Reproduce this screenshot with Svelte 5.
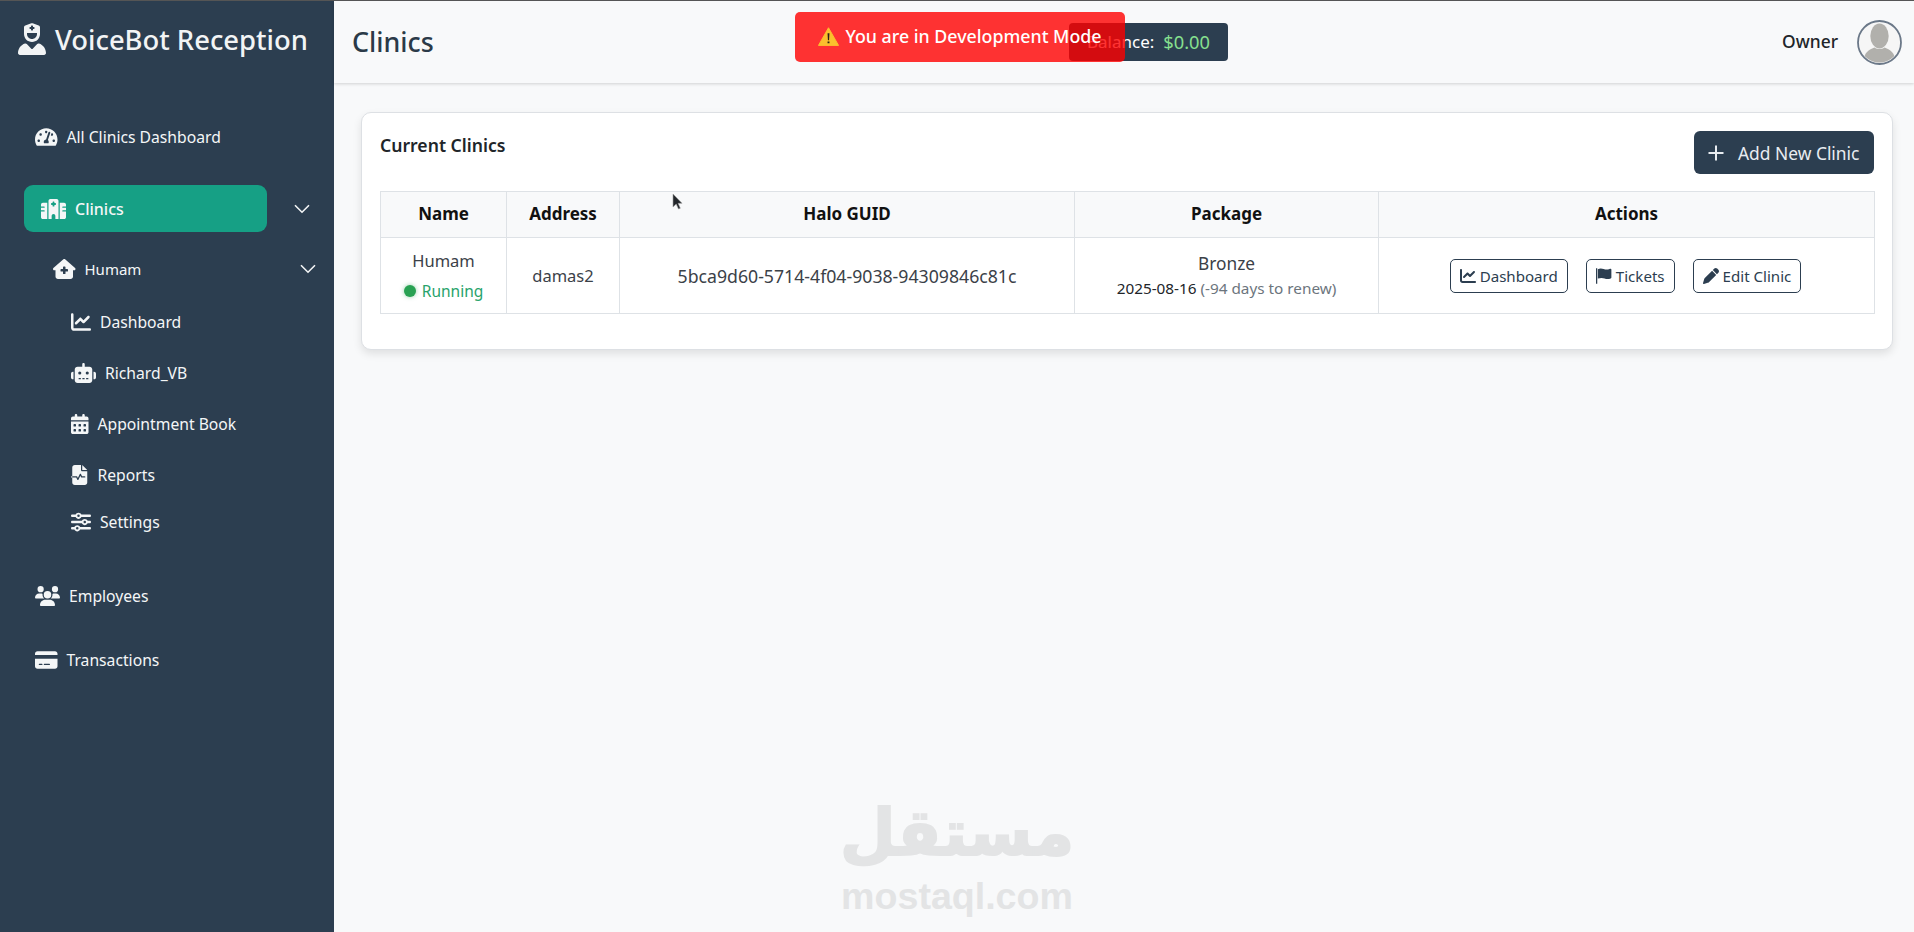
<script lang="ts">
  // FontAwesome-style solid glyphs, keyed by name: [viewBox width, path]
  const icons: Record<string, [number, string]> = {
    nurse: [448, 'M96 128V70.2c0-13.3 8.3-25.3 20.8-30l96-36c7.2-2.7 15.2-2.7 22.5 0l96 36c12.5 4.7 20.8 16.6 20.8 30V128h-.3c.2 2.6 .3 5.3 .3 8v40c0 70.7-57.3 128-128 128s-128-57.3-128-128V136c0-2.7 .1-5.4 .3-8H96zm48 48c0 44.2 35.8 80 80 80s80-35.8 80-80V160H144v16zM111.9 327.7c10.5-3.4 21.8 .4 29.4 8.5l71 75.5c6.3 6.7 17 6.7 23.3 0l71-75.5c7.6-8.1 18.9-11.9 29.4-8.5C401 348.6 448 409.4 448 481.3c0 17-13.8 30.7-30.7 30.7H30.7C13.8 512 0 498.2 0 481.3c0-71.9 47-132.7 111.9-153.6zM208 48V64H192c-4.4 0-8 3.6-8 8V88c0 4.4 3.6 8 8 8h16v16c0 4.4 3.6 8 8 8h16c4.4 0 8-3.6 8-8V96h16c4.4 0 8-3.6 8-8V72c0-4.4-3.6-8-8-8H240V48c0-4.4-3.6-8-8-8H216c-4.4 0-8 3.6-8 8z'],
    gauge: [576, 'M288 32C128.94 32 0 160.94 0 320c0 52.8 14.25 102.26 39.06 144.8 5.61 9.62 16.3 15.2 27.44 15.2h443c11.14 0 21.83-5.58 27.44-15.2C561.75 422.26 576 372.8 576 320c0-159.06-128.94-288-288-288zm0 64c14.71 0 26.58 10.13 30.32 23.65-1.11 2.26-2.64 4.23-3.45 6.67l-9.22 27.67c-5.13 3.49-10.97 6.01-17.64 6.01-17.67 0-32-14.33-32-32S270.33 96 288 96zM96 384c-17.67 0-32-14.33-32-32s14.33-32 32-32 32 14.33 32 32-14.33 32-32 32zm48-160c-17.67 0-32-14.33-32-32s14.33-32 32-32 32 14.33 32 32-14.33 32-32 32zm246.77-72.41l-61.33 184C343.13 347.33 352 364.54 352 384c0 11.72-3.38 22.55-8.88 32H232.88c-5.5-9.45-8.88-20.28-8.88-32 0-33.94 26.5-61.43 59.9-63.59l61.34-184.01c4.17-12.56 17.73-19.45 30.36-15.17 12.57 4.19 19.35 17.79 15.17 30.36zm14.66 57.2l15.52-46.55c3.47-1.29 7.13-2.23 11.05-2.23 17.67 0 32 14.33 32 32s-14.33 32-32 32c-11.38-.01-20.89-6.28-26.57-15.22zM480 384c-17.67 0-32-14.33-32-32s14.33-32 32-32 32 14.33 32 32-14.33 32-32 32z'],
    hospital: [640, 'M192 48c0-26.5 21.5-48 48-48H400c26.5 0 48 21.5 48 48V512H368V432c0-26.5-21.5-48-48-48s-48 21.5-48 48v80H192V48zM48 96H160V512H48c-26.5 0-48-21.5-48-48V320H80c8.8 0 16-7.2 16-16s-7.2-16-16-16H0V224H80c8.8 0 16-7.2 16-16s-7.2-16-16-16H0V144c0-26.5 21.5-48 48-48zm544 0c26.5 0 48 21.5 48 48v48H560c-8.8 0-16 7.2-16 16s7.2 16 16 16h80v64H560c-8.8 0-16 7.2-16 16s7.2 16 16 16h80V464c0 26.5-21.5 48-48 48H480V96H592zM312 64c-8.8 0-16 7.2-16 16v24H272c-8.8 0-16 7.2-16 16v16c0 8.8 7.2 16 16 16h24v24c0 8.8 7.2 16 16 16h16c8.8 0 16-7.2 16-16V152h24c8.8 0 16-7.2 16-16V120c0-8.8-7.2-16-16-16H344V80c0-8.8-7.2-16-16-16H312z'],
    house: [576, 'M543.8 287.6c17 0 32-14 32-32.1c1-9-3-17-11-24L309.5 7c-6-5-14-7-21-7s-15 1-22 8L10 231.5c-7 7-10 15-10 24c0 18 14 32.1 32 32.1h32V448c0 35.3 28.7 64 64 64H448.5c35.5 0 64.2-28.8 64-64.3l-.7-160.2h32zM256 208c0-8.8 7.2-16 16-16h32c8.8 0 16 7.2 16 16v48h48c8.8 0 16 7.2 16 16v32c0 8.8-7.2 16-16 16H320v48c0 8.8-7.2 16-16 16H272c-8.8 0-16-7.2-16-16V320H208c-8.8 0-16-7.2-16-16V272c0-8.8 7.2-16 16-16h48V208z'],
    chart: [512, 'M64 64c0-17.7-14.3-32-32-32S0 46.3 0 64V400c0 44.2 35.8 80 80 80H480c17.7 0 32-14.3 32-32s-14.3-32-32-32H80c-8.8 0-16-7.2-16-16V64zm406.6 86.6c12.5-12.5 12.5-32.8 0-45.3s-32.8-12.5-45.3 0L320 210.7l-57.4-57.4c-12.5-12.5-32.8-12.5-45.3 0l-112 112c-12.5 12.5-12.5 32.8 0 45.3s32.8 12.5 45.3 0L240 221.3l57.4 57.4c12.5 12.5 32.8 12.5 45.3 0l128-128z'],
    robot: [640, 'M320 0c17.7 0 32 14.3 32 32V96H472c39.8 0 72 32.2 72 72V440c0 39.8-32.2 72-72 72H168c-39.8 0-72-32.2-72-72V168c0-39.8 32.2-72 72-72H288V32c0-17.7 14.3-32 32-32zM208 384c-8.8 0-16 7.2-16 16s7.2 16 16 16h32c8.8 0 16-7.2 16-16s-7.2-16-16-16H208zm96 0c-8.8 0-16 7.2-16 16s7.2 16 16 16h32c8.8 0 16-7.2 16-16s-7.2-16-16-16H304zm96 0c-8.8 0-16 7.2-16 16s7.2 16 16 16h32c8.8 0 16-7.2 16-16s-7.2-16-16-16H400zM264 256a40 40 0 1 0 -80 0 40 40 0 1 0 80 0zm152 40a40 40 0 1 0 0-80 40 40 0 1 0 0 80zM48 224H64V416H48c-26.5 0-48-21.5-48-48V272c0-26.5 21.5-48 48-48zm544 0c26.5 0 48 21.5 48 48v96c0 26.5-21.5 48-48 48H576V224h16z'],
    calendar: [448, 'M128 0c17.7 0 32 14.3 32 32V64H288V32c0-17.7 14.3-32 32-32s32 14.3 32 32V64h48c26.5 0 48 21.5 48 48v48H0V112C0 85.5 21.5 64 48 64H96V32c0-17.7 14.3-32 32-32zM0 192H448V464c0 26.5-21.5 48-48 48H48c-26.5 0-48-21.5-48-48V192zm64 80v32c0 8.8 7.2 16 16 16h32c8.8 0 16-7.2 16-16V272c0-8.8-7.2-16-16-16H80c-8.8 0-16 7.2-16 16zm128 0v32c0 8.8 7.2 16 16 16h32c8.8 0 16-7.2 16-16V272c0-8.8-7.2-16-16-16H208c-8.8 0-16 7.2-16 16zm144-16c-8.8 0-16 7.2-16 16v32c0 8.8 7.2 16 16 16h32c8.8 0 16-7.2 16-16V272c0-8.8-7.2-16-16-16H336zM64 400v32c0 8.8 7.2 16 16 16h32c8.8 0 16-7.2 16-16V400c0-8.8-7.2-16-16-16H80c-8.8 0-16 7.2-16 16zm144-16c-8.8 0-16 7.2-16 16v32c0 8.8 7.2 16 16 16h32c8.8 0 16-7.2 16-16V400c0-8.8-7.2-16-16-16H208zm112 16v32c0 8.8 7.2 16 16 16h32c8.8 0 16-7.2 16-16V400c0-8.8-7.2-16-16-16H336c-8.8 0-16 7.2-16 16z'],
    report: [448, 'M96 0C60.7 0 32 28.7 32 64V288H144c6.1 0 11.6 3.4 14.3 8.8L176 332.2l49.7-99.4c2.7-5.4 8.2-8.8 14.3-8.8s11.6 3.4 14.3 8.8L281.9 288H352c8.8 0 16 7.2 16 16s-7.2 16-16 16H272c-6.1 0-11.6-3.4-14.3-8.8L240 275.8l-49.7 99.4c-2.7 5.4-8.2 8.8-14.3 8.8s-11.6-3.4-14.3-8.8L134.1 320H16c-8.8 0-16-7.2-16-16s7.2-16 16-16H32V320 448c0 35.3 28.7 64 64 64H352c35.3 0 64-28.7 64-64V160H288c-17.7 0-32-14.3-32-32V0H96zM288 0V128H416L288 0z'],
    sliders: [512, 'M0 416c0 17.7 14.3 32 32 32l54.7 0c12.3 28.3 40.5 48 73.3 48s61-19.7 73.3-48L480 448c17.7 0 32-14.3 32-32s-14.3-32-32-32l-246.7 0c-12.3-28.3-40.5-48-73.3-48s-61 19.7-73.3 48L32 384c-17.7 0-32 14.3-32 32zm128 0a32 32 0 1 1 64 0 32 32 0 1 1 -64 0zM320 256a32 32 0 1 1 64 0 32 32 0 1 1 -64 0zm32-80c-32.8 0-61 19.7-73.3 48L32 224c-17.7 0-32 14.3-32 32s14.3 32 32 32l246.7 0c12.3 28.3 40.5 48 73.3 48s61-19.7 73.3-48l54.7 0c17.7 0 32-14.3 32-32s-14.3-32-32-32l-54.7 0c-12.3-28.3-40.5-48-73.3-48zM192 128a32 32 0 1 1 0-64 32 32 0 1 1 0 64zm73.3-64C253 35.7 224.8 16 192 16s-61 19.7-73.3 48L32 64C14.3 64 0 78.3 0 96s14.3 32 32 32l86.7 0c12.3 28.3 40.5 48 73.3 48s61-19.7 73.3-48L480 128c17.7 0 32-14.3 32-32s-14.3-32-32-32L265.3 64z'],
    users: [640, 'M144 0a80 80 0 1 1 0 160A80 80 0 1 1 144 0zM512 0a80 80 0 1 1 0 160A80 80 0 1 1 512 0zM0 298.7C0 239.8 47.8 192 106.7 192h42.7c15.9 0 31 3.5 44.6 9.7c-1.3 7.2-1.9 14.7-1.9 22.3c0 38.2 16.8 72.5 43.3 96c-.2 0-.4 0-.7 0H21.3C9.6 320 0 310.4 0 298.7zM405.3 320c-.2 0-.4 0-.7 0c26.6-23.5 43.3-57.8 43.3-96c0-7.6-.7-15-1.9-22.3c13.6-6.3 28.7-9.7 44.6-9.7h42.7C592.2 192 640 239.8 640 298.7c0 11.8-9.6 21.3-21.3 21.3H405.3zM224 224a96 96 0 1 1 192 0 96 96 0 1 1 -192 0zM128 485.3C128 411.7 187.7 352 261.3 352H378.7C452.3 352 512 411.7 512 485.3c0 14.7-11.9 26.7-26.7 26.7H154.7c-14.7 0-26.7-11.9-26.7-26.7z'],
    card: [576, 'M64 32C28.7 32 0 60.7 0 96v32H576V96c0-35.3-28.7-64-64-64H64zM576 224H0V416c0 35.3 28.7 64 64 64H512c35.3 0 64-28.7 64-64V224zM112 352h64c8.8 0 16 7.2 16 16s-7.2 16-16 16H112c-8.8 0-16-7.2-16-16s7.2-16 16-16zm112 16c0-8.8 7.2-16 16-16H368c8.8 0 16 7.2 16 16s-7.2 16-16 16H240c-8.8 0-16-7.2-16-16z'],
    flag: [512, 'M0 8h40v496H0zM60 36c55-26 115-28 185-4s125 24 187-2c32-13 60-8 60 14v260c0 12-6 20-22 28-62 28-128 30-195 6s-128-24-215 0z'],
    pen: [512, 'M362.7 19.3L314.3 67.7 444.3 197.7l48.4-48.4c25-25 25-65.5 0-90.5L453.3 19.3c-25-25-65.5-25-90.5 0zm-71 71L58.6 323.5c-10.4 10.4-18 23.3-22.2 37.4L1 481.2C-1.5 489.7 .8 498.8 7 505s15.3 8.5 23.7 6.1l120.3-35.4c14.1-4.2 27-11.8 37.4-22.2L421.7 220.3 291.7 90.3z']
  };

  const subItems = [
    { icon: 'chart', label: 'Dashboard' },
    { icon: 'robot', label: 'Richard_VB' },
    { icon: 'calendar', label: 'Appointment Book' },
    { icon: 'report', label: 'Reports' },
    { icon: 'sliders', label: 'Settings' }
  ];

  const actions = [
    { icon: 'chart', label: 'Dashboard' },
    { icon: 'flag', label: 'Tickets' },
    { icon: 'pen', label: 'Edit Clinic' }
  ];
</script>

{#snippet fa(name: string, size: number)}
  <svg class="fa" style="height:{size}px" viewBox="0 0 {icons[name][0]} 512" fill="currentColor" aria-hidden="true"><path d={icons[name][1]} /></svg>
{/snippet}

{#snippet chevron()}
  <svg class="chevron" viewBox="0 0 16 10" fill="none" stroke="currentColor" stroke-width="1.6" aria-hidden="true"><path d="M1 1.2l7 7 7-7" /></svg>
{/snippet}

<div class="layout">
  <aside class="sidebar">
    <div class="brand">
      {@render fa('nurse', 32)}
      <span>VoiceBot Reception</span>
    </div>

    <nav>
      <a class="item all">{@render fa('gauge', 20)}<span>All Clinics Dashboard</span></a>

      <div class="active-row">
        <a class="pill">{@render fa('hospital', 20)}<span>Clinics</span></a>
        {@render chevron()}
      </div>

      <div class="clinic-row">
        <a class="clinic">{@render fa('house', 20)}<span>Humam</span></a>
        {@render chevron()}
      </div>

      {#each subItems as sub}
        <a class="sub" class:last={sub.label === 'Settings'}>
          {@render fa(sub.icon, 20)}<span>{sub.label}</span>
        </a>
      {/each}

      <a class="item employees">{@render fa('users', 20)}<span>Employees</span></a>
      <a class="item transactions">{@render fa('card', 20)}<span>Transactions</span></a>
    </nav>
  </aside>

  <main>
    <header>
      <h1>Clinics</h1>
      <div class="balance"><span>Balance:</span> <b>$0.00</b></div>
      <div class="owner">
        <span>Owner</span>
        <svg class="avatar" viewBox="0 0 45 45" aria-hidden="true">
          <circle cx="22.5" cy="22.5" r="21.5" fill="#f6f6f6" stroke="#6b7888" stroke-width="1.8" />
          <clipPath id="avatar-clip"><circle cx="22.5" cy="22.5" r="20" /></clipPath>
          <g clip-path="url(#avatar-clip)" fill="#b1b0ac">
            <ellipse cx="22.5" cy="16" rx="9.2" ry="12.5" />
            <path d="M7 41c0-8 4-11 10.5-13.5 3 2 7 2 10 0C34 30 38 33 38 41v4H7z" />
          </g>
        </svg>
      </div>
    </header>

    <section class="card">
      <div class="card-head">
        <h2>Current Clinics</h2>
        <button class="add" type="button">
          <svg viewBox="0 0 16 16" width="16" height="16" fill="none" stroke="currentColor" stroke-width="2" aria-hidden="true"><path d="M8 .5v15M.5 8h15" /></svg>
          Add New Clinic
        </button>
      </div>

      <table>
        <colgroup>
          <col class="c-name" /><col class="c-address" /><col class="c-guid" /><col class="c-package" /><col class="c-actions" />
        </colgroup>
        <thead>
          <tr><th>Name</th><th>Address</th><th>Halo GUID</th><th>Package</th><th>Actions</th></tr>
        </thead>
        <tbody>
          <tr>
            <td>
              <div class="name">Humam</div>
              <div class="status"><i class="dot"></i>Running</div>
            </td>
            <td>damas2</td>
            <td class="guid">5bca9d60-5714-4f04-9038-94309846c81c</td>
            <td>
              <div class="package">Bronze</div>
              <div class="renew">2025-08-16 <span>(-94 days to renew)</span></div>
            </td>
            <td>
              <div class="actions">
                {#each actions as action}
                  <button type="button" class="action">{@render fa(action.icon, 16)}{action.label}</button>
                {/each}
              </div>
            </td>
          </tr>
        </tbody>
      </table>
    </section>
  </main>
</div>

<div class="dev-banner">
  <svg viewBox="0 0 22 20" width="21" height="19" aria-hidden="true">
    <path d="M11 .8 21.6 19.4H.4z" fill="#fbc02d" stroke="#fbc02d" stroke-linejoin="round" />
    <path d="M10 6.5h2l-.4 7.5h-1.2zM10 15.2h2v2h-2z" fill="#2a2118" />
  </svg>
  <span>You are in Development Mode</span>
</div>

<svg class="cursor" viewBox="0 0 12 18" width="12" height="18" aria-hidden="true">
  <path d="M1 1v13l3.2-3 2.3 5 1.8-.8-2.2-4.9H10z" fill="#23272b" stroke="#9a9a9a" stroke-width=".6" />
</svg>

<div class="watermark">
  <div class="wm-ar" dir="rtl" lang="ar">مستقل</div>
  <div class="wm-en">mostaql.com</div>
</div>

<style>
  :global(body) {
    margin: 0;
    background: #f8f9fa;
    font-family: "Noto Sans", "Open Sans", sans-serif;
    color: #212529;
  }
  .layout {
    display: flex;
    height: 932px;
    overflow: hidden;
    border-top: 1px solid #555;
    box-sizing: border-box;
  }
  .fa {
    display: block;
    flex: none;
    width: auto;
  }
  .sidebar {
    flex: none;
    width: 334px;
    background: #2c3e50;
    color: #fff;
  }
  .brand {
    display: flex;
    align-items: center;
    gap: 9px;
    height: 82px;
    padding: 0 0 6px 18px;
    box-sizing: border-box;
    font-size: 27.4px;
    font-weight: 500;
    color: #f2f4f5;
    white-space: nowrap;
  }
  nav {
    display: flex;
    flex-direction: column;
    padding-top: 30px;
    font-size: 15.7px;
  }
  nav a {
    display: flex;
    align-items: center;
    color: #f4f6f7;
  }
  .item {
    height: 48px;
    padding-left: 35px;
    gap: 9px;
  }
  .active-row {
    display: flex;
    align-items: center;
    margin: 24px 0 16px 24px;
  }
  .pill {
    width: 243px;
    height: 47px;
    padding-left: 17px;
    gap: 9px;
    box-sizing: border-box;
    font-size: 16px;
    font-weight: 500;
    background: #16a085;
    border-radius: 9px;
  }
  .chevron {
    width: 16px;
    height: 10px;
    color: #f4f6f7;
    flex: none;
  }
  .active-row .chevron {
    margin-left: 27px;
  }
  .clinic-row {
    display: flex;
    align-items: center;
    height: 42px;
    margin-bottom: 6px;
    padding-left: 53px;
  }
  .clinic {
    gap: 9px;
    width: 247px;
    font-size: 15px;
  }
  .sub {
    height: 51px;
    padding-left: 71px;
    gap: 9px;
  }
  .sub.last {
    height: 44px;
    margin-bottom: 28px;
  }
  .employees {
    margin-bottom: 16px;
  }

  main {
    flex: 1;
    min-width: 0;
  }
  header {
    display: flex;
    align-items: center;
    height: 82px;
    padding: 0 12px 0 18px;
    box-sizing: border-box;
    background: #f8f9fa;
    box-shadow: 0 1px 3px rgba(0, 0, 0, 0.16);
  }
  h1 {
    width: 717px;
    margin: -2px 0 0;
    font-size: 26.8px;
    font-weight: 500;
    color: #2b3a48;
  }
  .balance {
    display: flex;
    align-items: center;
    justify-content: center;
    gap: 9px;
    width: 159px;
    height: 38px;
    padding-bottom: 2px;
    box-sizing: border-box;
    color: #fff;
    font-size: 17px;
    background: #2c3e50;
    border-radius: 4px;
  }
  .balance b {
    font-size: 18.3px;
    font-weight: 400;
    color: #86e08f;
  }
  .owner {
    display: flex;
    align-items: center;
    gap: 19px;
    margin-left: auto;
    font-size: 17.4px;
    font-weight: 500;
  }
  .owner span {
    margin-top: -2px;
  }
  .avatar {
    width: 45px;
    height: 45px;
  }

  .card {
    margin: 29px 21px 0 27px;
    padding: 18px 18px 35px;
    background: #fff;
    border: 1px solid #dde0e4;
    border-radius: 10px;
    box-shadow: 0 4px 8px rgba(0, 0, 0, 0.1);
  }
  .card-head {
    display: flex;
    align-items: flex-start;
    justify-content: space-between;
    height: 60px;
  }
  h2 {
    margin: 2px 0 0;
    font-size: 17.6px;
    font-weight: 600;
  }
  .add {
    display: flex;
    align-items: center;
    gap: 14px;
    width: 180px;
    height: 43px;
    padding: 0 14px;
    box-sizing: border-box;
    color: #e8ecf0;
    font: inherit;
    font-size: 17.4px;
    white-space: nowrap;
    background: #2c3e50;
    border: 0;
    border-radius: 6px;
  }
  table {
    width: 1494px;
    border-collapse: collapse;
    table-layout: fixed;
    font-size: 16.5px;
    text-align: center;
  }
  .c-name { width: 126px; }
  .c-address { width: 113px; }
  .c-guid { width: 455px; }
  .c-package { width: 304px; }
  .c-actions { width: 496px; }
  th,
  td {
    padding: 0;
    border: 1px solid #dee2e6;
  }
  th {
    height: 46px;
    padding-bottom: 2px;
    box-sizing: border-box;
    font-size: 17px;
    font-weight: 700;
    color: #111;
    background: #f8f9fa;
  }
  td {
    height: 75px;
    color: #3b4148;
  }
  .guid {
    font-size: 17.7px;
  }
  .name {
    line-height: 24px;
  }
  .status {
    display: flex;
    align-items: center;
    justify-content: center;
    gap: 6px;
    margin-top: 6px;
    line-height: 24px;
    font-size: 15.5px;
    color: #28a36b;
  }
  .dot {
    width: 12px;
    height: 12px;
    border-radius: 50%;
    background: #28a152;
    box-shadow: 0 0 4px rgba(40, 161, 82, 0.5);
  }
  .package {
    font-size: 17.3px;
    line-height: 25px;
  }
  .renew {
    font-size: 15.3px;
    line-height: 25px;
    color: #212529;
  }
  .renew span {
    color: #6c757d;
  }
  .actions {
    display: flex;
    justify-content: center;
    gap: 18px;
    padding-right: 2px;
  }
  .action {
    display: flex;
    align-items: center;
    gap: 4px;
    height: 34px;
    padding: 0 9px;
    color: #2c3e50;
    font: inherit;
    font-size: 15.1px;
    background: #fff;
    border: 1px solid #2c3e50;
    border-radius: 5px;
  }

  .dev-banner {
    position: absolute;
    top: 12px;
    left: 795px;
    z-index: 10;
    display: flex;
    align-items: center;
    justify-content: center;
    gap: 6px;
    width: 330px;
    height: 50px;
    padding-bottom: 2px;
    box-sizing: border-box;
    color: #fff;
    font-size: 17.8px;
    font-weight: 500;
    background: rgba(255, 0, 0, 0.8);
    border-radius: 5px;
  }
  .cursor {
    position: absolute;
    top: 193px;
    left: 672px;
  }
  .watermark {
    position: absolute;
    top: 790px;
    left: 822px;
    width: 270px;
    text-align: center;
    color: #e3e4e5;
    pointer-events: none;
  }
  .wm-ar {
    height: 88px;
    font-family: "DejaVu Sans", sans-serif;
    font-size: 64px;
    font-weight: 700;
    line-height: 86px;
    -webkit-text-stroke: 2px #e3e4e5;
  }
  .wm-en {
    font-family: "Liberation Sans", sans-serif;
    font-size: 37.6px;
    font-weight: 700;
    line-height: 36px;
  }
</style>
